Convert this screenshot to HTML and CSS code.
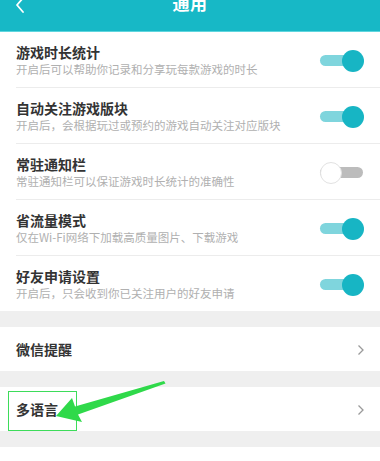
FILE: index.html
```html
<!DOCTYPE html>
<html lang="zh">
<head>
<meta charset="utf-8">
<link rel="stylesheet" href="styles.css">
</head>
<body>
<div class="page">
  <header class="topbar">
    <svg class="back" width="12" height="14" viewBox="0 0 12 14"><path d="M9 -2 L3 5 L9 12" fill="none" stroke="#fff" stroke-width="1.8" stroke-linecap="round" stroke-linejoin="round"/></svg>
    <div class="title">通用</div>
  </header>
  <section class="list">
    <div class="row">
      <div class="texts"><div class="name">游戏时长统计</div><div class="desc">开启后可以帮助你记录和分享玩每款游戏的时长</div></div>
      <div class="switch on"><span class="track"></span><span class="knob"></span></div>
    </div>
    <div class="row">
      <div class="texts"><div class="name">自动关注游戏版块</div><div class="desc">开启后，会根据玩过或预约的游戏自动关注对应版块</div></div>
      <div class="switch on"><span class="track"></span><span class="knob"></span></div>
    </div>
    <div class="row">
      <div class="texts"><div class="name">常驻通知栏</div><div class="desc">常驻通知栏可以保证游戏时长统计的准确性</div></div>
      <div class="switch off"><span class="track"></span><span class="knob"></span></div>
    </div>
    <div class="row">
      <div class="texts"><div class="name">省流量模式</div><div class="desc">仅在Wi-Fi网络下加载高质量图片、下载游戏</div></div>
      <div class="switch on"><span class="track"></span><span class="knob"></span></div>
    </div>
    <div class="row last">
      <div class="texts"><div class="name">好友申请设置</div><div class="desc">开启后，只会收到你已关注用户的好友申请</div></div>
      <div class="switch on"><span class="track"></span><span class="knob"></span></div>
    </div>
  </section>
  <div class="gap"></div>
  <div class="link-row"><span class="name">微信提醒</span><svg class="chev" width="8" height="12" viewBox="0 0 8 12"><path d="M1.5 1.5 L6 6 L1.5 10.5" fill="none" stroke="#9a9a9a" stroke-width="1.3"/></svg></div>
  <div class="gap"></div>
  <div class="link-row lang"><span class="name">多语言</span><svg class="chev" width="8" height="12" viewBox="0 0 8 12"><path d="M1.5 1.5 L6 6 L1.5 10.5" fill="none" stroke="#9a9a9a" stroke-width="1.3"/></svg>
    <div class="mark"></div>
    <svg class="arrow" width="110" height="50" viewBox="0 0 110 50"><polygon points="108,0 109.5,2.5 22,33.5 26,41 0,35 16,17 19,25.5" fill="#2fd94a"/></svg>
  </div>
  <div class="gap"></div>
  <div class="tail"></div>
</div>
</body>
</html>
```
FILE: styles.css
```css
* { box-sizing: border-box; }
html, body { margin: 0; padding: 0; background: #fff; }
body { font-family: "Noto Sans CJK SC", "Noto Sans", sans-serif; overflow: hidden; }
.page { width: 380px; height: 461px; overflow: hidden; }
.topbar {
  position: relative;
  height: 32px;
  background: #17b8c6;
  border-bottom: 1px solid #5fd6de;
  display: flex;
  justify-content: center;
  align-items: flex-start;
}
.back { position: absolute; left: 14px; top: 0; }
.title { color: #fff; font-size: 17px; font-weight: bold; line-height: 20px; margin-top: -7px; letter-spacing: 0.5px; }
.list { background: #fff; }
.row {
  display: flex;
  align-items: center;
  justify-content: space-between;
  height: 56px;
  margin-left: 16px;
  border-bottom: 1px solid #ececec;
  padding-right: 16px;
}
.row.last { border-bottom: none; height: 55px; }
.texts { display: flex; flex-direction: column; padding-top: 1px; }
.name { font-size: 14px; font-weight: bold; color: #333; line-height: 17px; }
.desc { font-size: 11.5px; color: #b0b0b0; line-height: 16px; }
.switch { position: relative; width: 44px; height: 22px; margin-top: 2px; }
.track { position: absolute; left: 0; right: 1px; top: 5.5px; height: 11px; border-radius: 6px; }
.knob { position: absolute; top: 0; width: 22px; height: 22px; border-radius: 50%; }
.on .track { background: #7fd5dd; }
.on .knob { right: 0; background: #17b5c4; }
.off .track { background: #bcbcbc; }
.off .knob { left: 0; background: #fff; border: 1px solid #e2e2e2; }
.gap { height: 16px; background: #efefef; }
.link-row {
  position: relative;
  height: 44px;
  display: flex;
  align-items: center;
  justify-content: space-between;
  padding: 0 15px 0 16px;
}
.link-row .name { font-size: 14px; font-weight: bold; color: #333; }
.chev { margin-top: 1px; }
.mark {
  position: absolute;
  left: 8px; top: 4px;
  width: 69px; height: 40px;
  border: 1.5px solid #3ddc5a;
}
.arrow { position: absolute; left: 56px; top: -6px; }
.tail { height: 20px; background: #fff; }
```
